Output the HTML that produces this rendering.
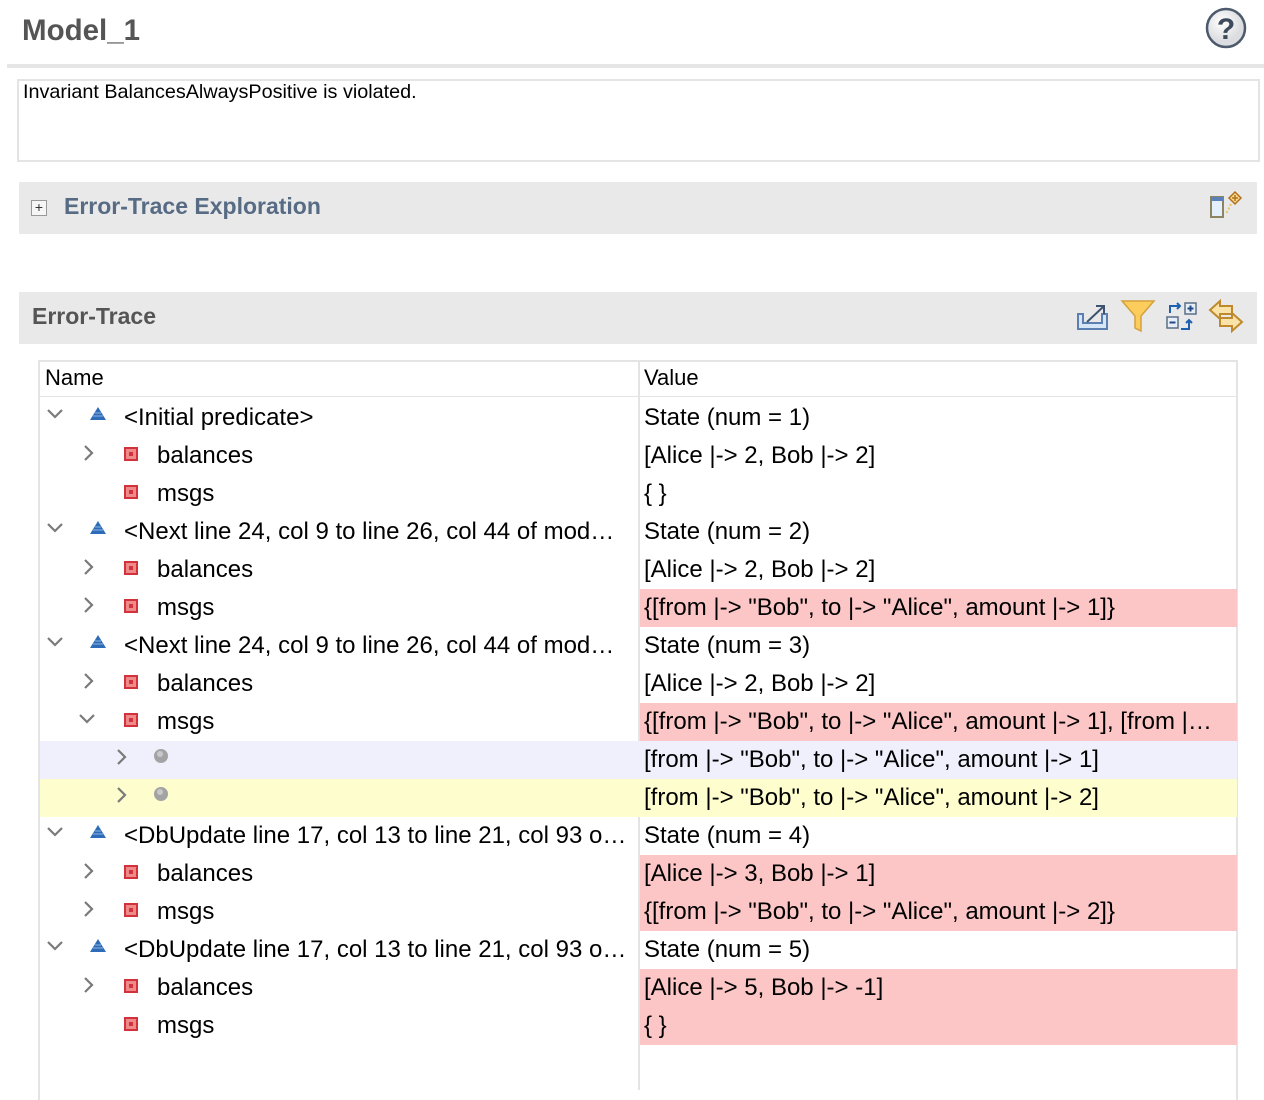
<!DOCTYPE html>
<html><head><meta charset="utf-8"><style>
*{margin:0;padding:0;box-sizing:border-box}
body{width:1264px;height:1090px;background:#fff;position:relative;overflow:hidden;font-family:"Liberation Sans",Arial,sans-serif;color:#000}
.abs{position:absolute}
.row{position:absolute;left:40px;width:1197px;height:38px}
.nm{position:absolute;top:0;line-height:38px;font-size:24px;white-space:nowrap}
.val{position:absolute;left:600px;width:597px;top:0;height:38px;line-height:38px;font-size:24px;padding-left:4px;white-space:nowrap;overflow:hidden}
.red{background:#fdc6c6}
.ic{position:absolute}
</style></head><body>
<div class="abs" style="left:22px;top:14px;font-size:29.5px;font-weight:bold;color:#555">Model_1</div>
<svg class="abs" style="left:1204px;top:6px" width="44" height="44" viewBox="0 0 44 44"><defs><radialGradient id="g" cx="40%" cy="35%"><stop offset="0" stop-color="#fff"/><stop offset="1" stop-color="#dcdde0"/></radialGradient></defs><circle cx="22" cy="22" r="19" fill="url(#g)" stroke="#4c5a6c" stroke-width="2.5"/><text x="22" y="33" text-anchor="middle" font-family="Liberation Sans" font-weight="bold" font-size="30" fill="#3c4a5c">?</text></svg>
<div class="abs" style="left:7px;top:64px;width:1257px;height:4px;background:#e6e6e6"></div>
<div class="abs" style="left:17px;top:79px;width:1243px;height:83px;border:2px solid #e4e4e4;font-size:19.8px;padding:0 4px">Invariant BalancesAlwaysPositive is violated.</div>
<div class="abs" style="left:19px;top:182px;width:1238px;height:52px;background:#e9e9e9"></div>
<div class="abs" style="left:31px;top:200px;width:16px;height:16px;border:1px solid #999;background:#f6f6f6;font-size:14px;line-height:13px;text-align:center;color:#333">+</div>
<div class="abs" style="left:64px;top:193px;font-size:23px;font-weight:bold;color:#576b84">Error-Trace Exploration</div>
<svg class="abs" style="left:1208px;top:190px" width="36" height="32"><rect x="3" y="7" width="12" height="20" fill="#e3f0fb" stroke="#8d8462" stroke-width="2"/><rect x="3" y="7" width="12" height="4" fill="#5a82b8"/><path d="M27 2l6 6-6 6-6-6z" fill="#f7d98e" stroke="#b3721c" stroke-width="1.5"/><path d="M27 5v6M24 8h6" stroke="#b3721c" stroke-width="1.5"/><path d="M23 14l-5 10" stroke="#e9c36a" stroke-width="2" stroke-dasharray="2 2"/></svg>
<div class="abs" style="left:19px;top:292px;width:1238px;height:52px;background:#e9e9e9"></div>
<div class="abs" style="left:32px;top:303px;font-size:23px;font-weight:bold;color:#555">Error-Trace</div>
<svg class="abs" style="left:1075px;top:300px" width="36" height="32"><path d="M3 14v15h29V14h-5v9H8v-9z" fill="#d6e6f6" stroke="#5a7fb0" stroke-width="2"/><path d="M12 22l16-15" stroke="#3c5470" stroke-width="2"/><path d="M21 6h8v8" fill="none" stroke="#3c5470" stroke-width="2"/></svg>
<svg class="abs" style="left:1120px;top:298px" width="36" height="36"><path d="M2 3h32L21 18v15l-6-3V18z" fill="#fccc5c" stroke="#d4a13a" stroke-width="1.5"/></svg>
<svg class="abs" style="left:1165px;top:300px" width="36" height="32"><rect x="20" y="3" width="11" height="11" fill="#e8eef5" stroke="#5a6e88" stroke-width="1.5"/><path d="M22.5 8.5h6M25.5 5.5v6" stroke="#1e4a8a" stroke-width="2"/><rect x="2" y="17" width="11" height="11" fill="#e8eef5" stroke="#5a6e88" stroke-width="1.5"/><path d="M4.5 22.5h6" stroke="#1e4a8a" stroke-width="2"/><path d="M5 13V6h10M12 3l3 3-3 3M16 29h8v-9M21 23l3-3 3 3" fill="none" stroke="#2060b0" stroke-width="2"/></svg>
<svg class="abs" style="left:1208px;top:298px" width="36" height="36"><path d="M2 12l10-9v5h12v8H12v5z" fill="#f9e3a8" stroke="#c08a2c" stroke-width="2"/><path d="M34 24l-10-9v5H12v8h12v5z" fill="#f9e3a8" stroke="#c08a2c" stroke-width="2"/></svg>

<div class="abs" style="left:38px;top:360px;width:1200px;height:740px;border:2px solid #e4e4e4;border-bottom:none"></div>
<div class="abs" style="left:40px;top:396px;width:1197px;height:1px;background:#e4e4e4"></div>
<div class="abs" style="left:638px;top:362px;width:2px;height:728px;background:#e4e4e4"></div>
<div class="abs" style="left:45px;top:365px;font-size:22px">Name</div>
<div class="abs" style="left:644px;top:365px;font-size:22px">Value</div>

<svg width="0" height="0" style="position:absolute"><defs>
<g id="dn"><path d="M1 1l7 7 7-7" fill="none" stroke="#7a7a7a" stroke-width="2.2"/></g>
<g id="rt"><path d="M1 1l7 7-7 7" fill="none" stroke="#7a7a7a" stroke-width="2.2"/></g>
<g id="tri"><path d="M8 0L16 13H0z" fill="#2f6cb8"/><path d="M3 9h10M5 6h6" stroke="#8fb4e4" stroke-width="1"/></g>
<g id="sq"><rect x="1" y="1" width="12" height="12" fill="#ef8a8a" stroke="#d2323c" stroke-width="2"/><rect x="5" y="5" width="4" height="4" fill="#d2323c"/></g>
<g id="ci"><circle cx="7" cy="7" r="7" fill="#a3a3a3"/><circle cx="6" cy="5" r="3" fill="#c8c8c8"/></g>
</defs></svg>

<div class="row" style="top:399px"><svg class="ic" style="left:7px;top:10px" width="17" height="10"><use href="#dn"/></svg><svg class="ic" style="left:50px;top:8px" width="16" height="14"><use href="#tri"/></svg><div class="nm" style="left:84px">&lt;Initial predicate&gt;</div><div class="val">State (num = 1)</div></div>
<div class="row" style="top:437px"><svg class="ic" style="left:44px;top:8px" width="10" height="17"><use href="#rt"/></svg><svg class="ic" style="left:84px;top:10px" width="14" height="14"><use href="#sq"/></svg><div class="nm" style="left:117px">balances</div><div class="val">[Alice |-&gt; 2, Bob |-&gt; 2]</div></div>
<div class="row" style="top:475px"><svg class="ic" style="left:84px;top:10px" width="14" height="14"><use href="#sq"/></svg><div class="nm" style="left:117px">msgs</div><div class="val">{ }</div></div>
<div class="row" style="top:513px"><svg class="ic" style="left:7px;top:10px" width="17" height="10"><use href="#dn"/></svg><svg class="ic" style="left:50px;top:8px" width="16" height="14"><use href="#tri"/></svg><div class="nm" style="left:84px">&lt;Next line 24, col 9 to line 26, col 44 of mod…</div><div class="val">State (num = 2)</div></div>
<div class="row" style="top:551px"><svg class="ic" style="left:44px;top:8px" width="10" height="17"><use href="#rt"/></svg><svg class="ic" style="left:84px;top:10px" width="14" height="14"><use href="#sq"/></svg><div class="nm" style="left:117px">balances</div><div class="val">[Alice |-&gt; 2, Bob |-&gt; 2]</div></div>
<div class="row" style="top:589px"><svg class="ic" style="left:44px;top:8px" width="10" height="17"><use href="#rt"/></svg><svg class="ic" style="left:84px;top:10px" width="14" height="14"><use href="#sq"/></svg><div class="nm" style="left:117px">msgs</div><div class="val red">{[from |-&gt; "Bob", to |-&gt; "Alice", amount |-&gt; 1]}</div></div>
<div class="row" style="top:627px"><svg class="ic" style="left:7px;top:10px" width="17" height="10"><use href="#dn"/></svg><svg class="ic" style="left:50px;top:8px" width="16" height="14"><use href="#tri"/></svg><div class="nm" style="left:84px">&lt;Next line 24, col 9 to line 26, col 44 of mod…</div><div class="val">State (num = 3)</div></div>
<div class="row" style="top:665px"><svg class="ic" style="left:44px;top:8px" width="10" height="17"><use href="#rt"/></svg><svg class="ic" style="left:84px;top:10px" width="14" height="14"><use href="#sq"/></svg><div class="nm" style="left:117px">balances</div><div class="val">[Alice |-&gt; 2, Bob |-&gt; 2]</div></div>
<div class="row" style="top:703px"><svg class="ic" style="left:39px;top:11px" width="17" height="10"><use href="#dn"/></svg><svg class="ic" style="left:84px;top:10px" width="14" height="14"><use href="#sq"/></svg><div class="nm" style="left:117px">msgs</div><div class="val red">{[from |-&gt; "Bob", to |-&gt; "Alice", amount |-&gt; 1], [from |…</div></div>
<div class="row" style="top:741px;background:#f0f0fd"><svg class="ic" style="left:77px;top:8px" width="10" height="17"><use href="#rt"/></svg><svg class="ic" style="left:114px;top:8px" width="14" height="14"><use href="#ci"/></svg><div class="val">[from |-&gt; "Bob", to |-&gt; "Alice", amount |-&gt; 1]</div></div>
<div class="row" style="top:779px;background:#fdfdcd"><svg class="ic" style="left:77px;top:8px" width="10" height="17"><use href="#rt"/></svg><svg class="ic" style="left:114px;top:8px" width="14" height="14"><use href="#ci"/></svg><div class="val">[from |-&gt; "Bob", to |-&gt; "Alice", amount |-&gt; 2]</div></div>
<div class="row" style="top:817px"><svg class="ic" style="left:7px;top:10px" width="17" height="10"><use href="#dn"/></svg><svg class="ic" style="left:50px;top:8px" width="16" height="14"><use href="#tri"/></svg><div class="nm" style="left:84px">&lt;DbUpdate line 17, col 13 to line 21, col 93 o…</div><div class="val">State (num = 4)</div></div>
<div class="row" style="top:855px"><svg class="ic" style="left:44px;top:8px" width="10" height="17"><use href="#rt"/></svg><svg class="ic" style="left:84px;top:10px" width="14" height="14"><use href="#sq"/></svg><div class="nm" style="left:117px">balances</div><div class="val red">[Alice |-&gt; 3, Bob |-&gt; 1]</div></div>
<div class="row" style="top:893px"><svg class="ic" style="left:44px;top:8px" width="10" height="17"><use href="#rt"/></svg><svg class="ic" style="left:84px;top:10px" width="14" height="14"><use href="#sq"/></svg><div class="nm" style="left:117px">msgs</div><div class="val red">{[from |-&gt; "Bob", to |-&gt; "Alice", amount |-&gt; 2]}</div></div>
<div class="row" style="top:931px"><svg class="ic" style="left:7px;top:10px" width="17" height="10"><use href="#dn"/></svg><svg class="ic" style="left:50px;top:8px" width="16" height="14"><use href="#tri"/></svg><div class="nm" style="left:84px">&lt;DbUpdate line 17, col 13 to line 21, col 93 o…</div><div class="val">State (num = 5)</div></div>
<div class="row" style="top:969px"><svg class="ic" style="left:44px;top:8px" width="10" height="17"><use href="#rt"/></svg><svg class="ic" style="left:84px;top:10px" width="14" height="14"><use href="#sq"/></svg><div class="nm" style="left:117px">balances</div><div class="val red">[Alice |-&gt; 5, Bob |-&gt; -1]</div></div>
<div class="row" style="top:1007px"><svg class="ic" style="left:84px;top:10px" width="14" height="14"><use href="#sq"/></svg><div class="nm" style="left:117px">msgs</div><div class="val red">{ }</div></div>
</body></html>
